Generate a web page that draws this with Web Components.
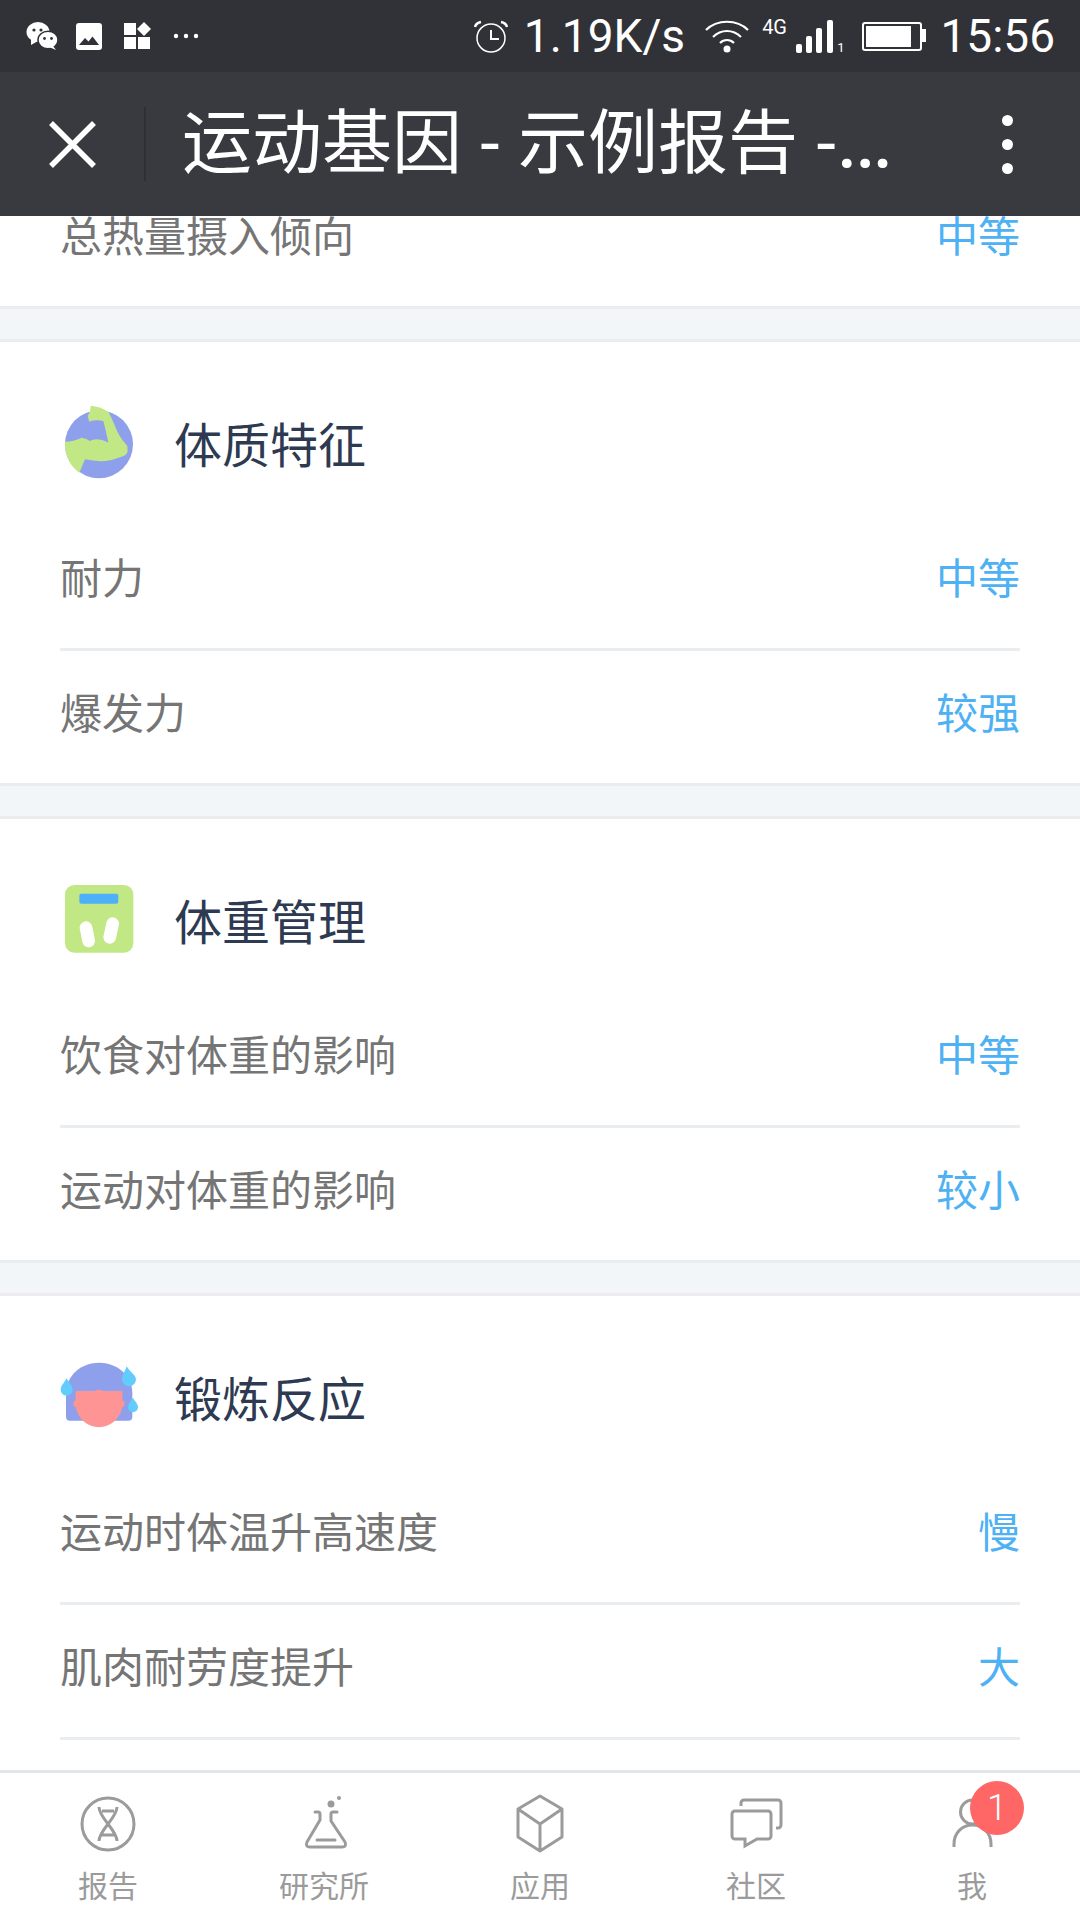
<!DOCTYPE html>
<html lang="zh">
<head>
<meta charset="utf-8">
<title>运动基因</title>
<style>
  html, body { margin: 0; padding: 0; }
  body { width: 1080px; height: 1920px; overflow: hidden; font-family: Roboto, "Noto Sans CJK SC", sans-serif; }
</style>
</head>
<body>
<app-shell>
  <status-bar slot="status"></status-bar>
  <title-bar slot="title">运动基因 - 示例报告 -<span style="font-size:86px;line-height:0">…</span></title-bar>

  <report-row label="总热量摄入倾向" value="中等"></report-row>
  <section-gap></section-gap>

  <report-section heading="体质特征">
    <svg slot="icon" viewBox="60 33 240 240" width="80" height="80">
      <circle cx="177" cy="160" r="102" fill="#8e9fec"/>
      <path fill="#c1e884" d="M152 44 Q180 46 205 62 Q215 80 225 105 Q235 135 262 165 L263 180 Q262 195 235 200 Q195 218 135 205 L118 245 A102 102 0 0 1 75 160 L75 152 Q100 152 125 140 Q140 142 150 150 Q170 138 205 155 Q198 120 190 90 Q165 85 148 92 L143 75 L150 62 Z"/>
    </svg>
    <report-row label="耐力" value="中等" divider></report-row>
    <report-row label="爆发力" value="较强"></report-row>
  </report-section>
  <section-gap></section-gap>

  <report-section heading="体重管理">
    <svg slot="icon" viewBox="60 24 240 240" width="80" height="80">
      <rect x="75" y="42" width="205" height="203" rx="28" fill="#c1e884"/>
      <rect x="118" y="68" width="117" height="30" rx="6" fill="#4db0f8"/>
      <path d="M138 170 L146 210 M218 158 L209 199" stroke="#fff" stroke-width="38" stroke-linecap="round" fill="none"/>
    </svg>
    <report-row label="饮食对体重的影响" value="中等" divider></report-row>
    <report-row label="运动对体重的影响" value="较小"></report-row>
  </report-section>
  <section-gap></section-gap>

  <report-section heading="锻炼反应">
    <svg slot="icon" viewBox="60 33 240 240" width="80" height="80">
      <path fill="#8e9fec" d="M78 215 V145 C78 90 125 53 177 53 C230 53 277 90 277 145 V215 Q277 227 265 227 H90 Q78 227 78 215 Z"/>
      <path fill="#ff9494" d="M107 138 H165 Q177 130 189 138 H247 V165 A12 12 0 0 1 247 187 C240 222 210 247 177 247 C144 247 114 222 107 187 A12 12 0 0 1 107 165 Z"/>
      <path fill="#62cdfc" d="M80 100 C88 115 98 122 98 134 A18 18 0 0 1 62 134 C62 122 72 115 80 100 Z"/>
      <path fill="#62cdfc" d="M260 64 C270 82 288 90 288 103 A21 21 0 0 1 246 103 C246 90 255 80 260 64 Z"/>
      <path fill="#62cdfc" d="M279 158 C285 170 294 175 294 187 A15 15 0 0 1 264 187 C264 175 273 170 279 158 Z"/>
    </svg>
    <report-row label="运动时体温升高速度" value="慢" divider></report-row>
    <report-row label="肌肉耐劳度提升" value="大" divider></report-row>
  </report-section>

  <tab-bar slot="tabs">
    <tab-item label="报告">
      <svg viewBox="0 0 64 64" width="64" height="64" fill="none" stroke="#9b9b9b" stroke-width="3">
        <circle cx="32" cy="32" r="26"/>
        <path d="M23 15c0 11 18 23 18 34M41 15c0 11-18 23-18 34M26 19h12M26 43h12"/>
      </svg>
    </tab-item>
    <tab-item label="研究所">
      <svg viewBox="0 0 64 64" width="64" height="64" fill="none" stroke="#9b9b9b" stroke-width="3" stroke-linecap="round" stroke-linejoin="round">
        <path d="M23 20h3a2 2 0 0 1 2 2v6L15 50q-2 5 3 5h32q5 0 3-5L39 29v-7a2 2 0 0 1 2-2h4M25 48h18"/>
        <circle cx="39" cy="12" r="3.5" fill="#9b9b9b" stroke="none"/>
        <circle cx="47" cy="6" r="2" fill="#9b9b9b" stroke="none"/>
      </svg>
    </tab-item>
    <tab-item label="应用">
      <svg viewBox="0 0 64 64" width="64" height="64" fill="none" stroke="#9b9b9b" stroke-width="3" stroke-linejoin="round">
        <path d="M32 4L54 17V45L32 59L10 45V17ZM10 17L32 32L54 17M32 32V59"/>
      </svg>
    </tab-item>
    <tab-item label="社区">
      <svg viewBox="0 0 64 64" width="64" height="64" fill="none" stroke="#9b9b9b" stroke-width="3">
        <path d="M11 19H44a3 3 0 0 1 3 3V44a3 3 0 0 1-3 3H33L21 54V47H11a3 3 0 0 1-3-3V22a3 3 0 0 1 3-3Z"/>
        <path d="M17 14V11a3 3 0 0 1 3-3H54a3 3 0 0 1 3 3V33a3 3 0 0 1-3 3H52"/>
      </svg>
    </tab-item>
    <tab-item label="我" badge="1">
      <svg viewBox="0 0 64 64" width="64" height="64" fill="none" stroke="#9b9b9b" stroke-width="3">
        <circle cx="32.5" cy="20" r="12"/>
        <path d="M14 55V52C14 41 22 33 32.5 33S51 41 51 52V55"/>
      </svg>
    </tab-item>
  </tab-bar>
</app-shell>

<script>
  // the whole screen: status bar, title bar, clipped scroller, tab bar
  class AppShell extends HTMLElement {
    connectedCallback() {
      this.attachShadow({ mode: 'open' }).innerHTML = `
        <style>
          :host { display: flex; flex-direction: column; width: 1080px; height: 1920px; background: #fff; }
          .scroller { flex: 1; overflow: hidden; min-height: 0; }
          .inner { margin-top: -42px; }
        </style>
        <slot name="status"></slot>
        <slot name="title"></slot>
        <div class="scroller"><div class="inner"><slot></slot></div></div>
        <slot name="tabs"></slot>`;
    }
  }

  class StatusBar extends HTMLElement {
    connectedCallback() {
      this.attachShadow({ mode: 'open' }).innerHTML = `
        <style>
          :host { display: flex; align-items: center; height: 72px; background: #313237; color: #fff; box-sizing: border-box; padding: 0 25px 0 26px; font-family: Roboto, sans-serif; flex: none; }
          .left { display: flex; align-items: center; gap: 18px; flex: 1; }
          .right { display: flex; align-items: center; }
          .speed, .clock { font-size: 46px; line-height: 74px; }
          svg { display: block; }
          .g { font-size: 20px; line-height: 20px; width: 27px; align-self: flex-start; margin-top: 18px; }
          .one { font-size: 13px; line-height: 13px; align-self: flex-start; margin-top: 42px; margin-right: 18px; }
        </style>
        <div class="left">
          <svg width="32" height="28" viewBox="0 0 32 28" fill="#fff">
            <ellipse cx="12" cy="10" rx="11.5" ry="10"/><path d="M5 16l0 7 7-4z"/>
            <ellipse cx="22" cy="18" rx="10" ry="8.8" stroke="#313237" stroke-width="1.5"/><path d="M27 24l3 4-7-3z"/>
            <circle cx="8" cy="8" r="1.6" fill="#313237"/><circle cx="15" cy="8" r="1.6" fill="#313237"/>
            <circle cx="18.5" cy="16.5" r="1.4" fill="#313237"/><circle cx="25.5" cy="16.5" r="1.4" fill="#313237"/>
          </svg>
          <svg width="26" height="27" viewBox="0 0 26 27">
            <rect width="26" height="27" rx="3" fill="#fff"/>
            <path d="M3 22l6-7 3.500 3.500 4-5 6.500 8.500z" fill="#313237"/>
          </svg>
          <svg width="28" height="28" viewBox="0 0 28 28" fill="#fff" style="margin-left:4px">
            <rect x="0" y="1" width="12" height="12"/><path d="M20 0l7 7-7 7-7-7z"/>
            <rect x="0" y="15" width="12" height="12"/><rect x="14" y="15" width="12" height="12"/>
          </svg>
          <svg width="26" height="6" viewBox="0 0 26 6" fill="#fff" style="margin-left:3px">
            <circle cx="3" cy="3" r="2.200"/><circle cx="13" cy="3" r="2.200"/><circle cx="23" cy="3" r="2.200"/>
          </svg>
        </div>
        <div class="right">
          <svg width="34" height="33" viewBox="0 0 34 33" fill="none" stroke="#fff" stroke-width="1.500" style="margin-right:16px">
            <circle cx="17" cy="18" r="14"/><path d="M17 10v9h8" stroke-width="2"/>
            <path d="M1 7q1-4 6-5M33 7q-1-4-6-5" stroke-width="2.500"/>
          </svg>
          <span class="speed">1.19K/s</span>
          <svg width="44" height="33" viewBox="0 0 44 33" fill="none" stroke="#fff" stroke-width="2.200" style="margin:0 13px 0 20px">
            <path d="M1 10C12 -1 32 -1 43 10M8 17C16 9 28 9 36 17M15 23C19 19 25 19 29 23"/>
            <circle cx="22" cy="29" r="3.500" fill="#fff" stroke="none"/>
          </svg>
          <span class="g">4G</span>
          <svg width="37" height="33" viewBox="0 0 37 33" fill="#fff" style="margin-left:7px;margin-right:4px">
            <rect x="0" y="24" width="6" height="9" rx="2"/><rect x="10" y="16" width="6" height="17" rx="2"/>
            <rect x="20" y="8" width="6" height="25" rx="2"/><rect x="31" y="0" width="6" height="33" rx="2"/>
          </svg>
          <span class="one">1</span>
          <svg width="64" height="29" viewBox="0 0 64 29" style="margin-right:14px">
            <rect x="1" y="1" width="58" height="27" rx="2" fill="none" stroke="#fff" stroke-width="2"/>
            <rect x="4" y="4" width="45" height="21" fill="#fff"/>
            <rect x="60" y="7" width="4" height="13" fill="#fff"/>
          </svg>
          <span class="clock">15:56</span>
        </div>`;
    }
  }

  class TitleBar extends HTMLElement {
    connectedCallback() {
      this.attachShadow({ mode: 'open' }).innerHTML = `
        <style>
          :host { display: flex; align-items: center; height: 144px; background: #393a40; color: #fff; flex: none; }
          .close { width: 144px; display: flex; padding-left: 49px; box-sizing: border-box; }
          .sep { width: 2px; height: 74px; background: #2f3035; margin-right: 36px; }
          .text { flex: 1; font: 400 70px/148px Roboto, "Noto Sans CJK SC", sans-serif; word-spacing: 1px; white-space: nowrap; }
          .more { display: flex; flex-direction: column; gap: 13px; margin-right: 67px; }
          .more i { display: block; width: 11px; height: 11px; border-radius: 50%; background: #fff; }
        </style>
        <div class="close">
          <svg width="47" height="47" viewBox="0 0 47 47" stroke="#fff" stroke-width="5.500"><path d="M2 2L45 45M45 2L2 45"/></svg>
        </div>
        <div class="sep"></div>
        <div class="text"><slot></slot></div>
        <div class="more"><i></i><i></i><i></i></div>`;
    }
  }

  class SectionGap extends HTMLElement {
    connectedCallback() {
      this.attachShadow({ mode: 'open' }).innerHTML = `
        <style>
          :host { display: block; height: 30px; background: #f2f6f9; border-top: 3px solid #e9edf0; border-bottom: 3px solid #ececee; }
        </style>`;
    }
  }

  class ReportSection extends HTMLElement {
    connectedCallback() {
      const heading = this.getAttribute('heading');
      this.attachShadow({ mode: 'open' }).innerHTML = `
        <style>
          :host { display: block; background: #fff; }
          .head { display: flex; align-items: center; height: 174px; padding-left: 60px; padding-top: 26px; box-sizing: border-box; }
          .name { margin-left: 34px; font: 400 48px/60px "Noto Sans CJK SC", sans-serif; color: #2d3a52; }
          ::slotted(svg) { display: block; }
        </style>
        <div class="head"><slot name="icon"></slot><span class="name">${heading}</span></div>
        <slot></slot>`;
    }
  }

  class ReportRow extends HTMLElement {
    connectedCallback() {
      const label = this.getAttribute('label');
      const value = this.getAttribute('value');
      const divider = this.hasAttribute('divider');
      this.attachShadow({ mode: 'open' }).innerHTML = `
        <style>
          :host { display: block; background: #fff; padding: 0 60px; }
          .row { display: flex; justify-content: space-between; align-items: center; box-sizing: border-box; height: ${divider ? 135 : 132}px; padding-bottom: ${divider ? 12 : 13}px; ${divider ? 'border-bottom: 3px solid #eaedf0;' : ''} font: 400 42px/60px "Noto Sans CJK SC", sans-serif; }
          .label { color: #757575; }
          .value { color: #4db1f4; }
        </style>
        <div class="row"><span class="label">${label}</span><span class="value">${value}</span></div>`;
    }
  }

  class TabBar extends HTMLElement {
    connectedCallback() {
      this.attachShadow({ mode: 'open' }).innerHTML = `
        <style>
          :host { display: grid; grid-template-columns: repeat(5, 1fr); flex: none; height: 150px; box-sizing: border-box; background: #fff; border-top: 3px solid #e2e6e9; }
        </style>
        <slot></slot>`;
    }
  }

  class TabItem extends HTMLElement {
    connectedCallback() {
      const label = this.getAttribute('label');
      const badge = this.getAttribute('badge');
      this.attachShadow({ mode: 'open' }).innerHTML = `
        <style>
          :host { display: flex; flex-direction: column; align-items: center; padding-top: 19px; color: #9b9b9b; }
          .icon { position: relative; width: 64px; height: 64px; }
          ::slotted(svg) { display: block; }
          .label { margin-top: 10px; font: 400 30px/36px "Noto Sans CJK SC", sans-serif; }
          .badge { position: absolute; left: 30px; top: -11px; width: 54px; height: 54px; border-radius: 50%; background: #ff6666; color: #fff; font: 300 36px/54px Roboto, sans-serif; text-align: center; }
        </style>
        <div class="icon"><slot></slot>${badge ? `<span class="badge">${badge}</span>` : ''}</div>
        <span class="label">${label}</span>`;
    }
  }

  customElements.define('app-shell', AppShell);
  customElements.define('status-bar', StatusBar);
  customElements.define('title-bar', TitleBar);
  customElements.define('section-gap', SectionGap);
  customElements.define('report-section', ReportSection);
  customElements.define('report-row', ReportRow);
  customElements.define('tab-bar', TabBar);
  customElements.define('tab-item', TabItem);
</script>
</body>
</html>
